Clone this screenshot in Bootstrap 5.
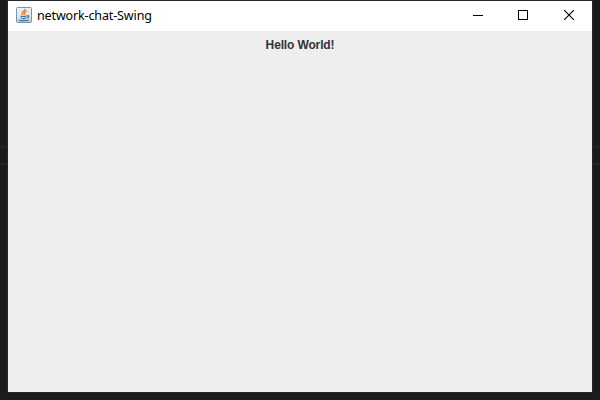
<!DOCTYPE html>
<html lang="en">
<head>
<meta charset="utf-8">
<title>network-chat-Swing</title>
<link href="https://cdn.jsdelivr.net/npm/bootstrap@5.3.0/dist/css/bootstrap.min.css" rel="stylesheet">
<style>
body{background:linear-gradient(#1b1b1b 0 146px,#252525 146px 148px,#1b1b1b 148px 163px,#252525 163px 165px,#1b1b1b 165px);padding:1px 8px 8px}
.app-window{background:#eee;outline:1px solid #272727}
.title-bar{height:30px;padding-bottom:2px;background:#fff;color:#000}
.app-icon{margin-left:8px}
.app-title{font:12.5px/18px "Noto Sans","Open Sans",sans-serif;letter-spacing:-.13px;margin-left:5px;padding-top:2px}
.win-btn{width:46px;height:28px}
.win-btn-min{width:44px}
.hello{font:bold 12px/15px "Liberation Sans",Arial,sans-serif;letter-spacing:-.14px;color:#333;padding-top:7px}
</style>
<script src="https://cdn.jsdelivr.net/npm/bootstrap@5.3.0/dist/js/bootstrap.bundle.min.js"></script>
</head>
<body class="vh-100 overflow-hidden">
<div class="app-window d-flex flex-column h-100">
  <header class="title-bar d-flex align-items-center flex-shrink-0">
    <svg class="app-icon flex-shrink-0" width="16" height="16" viewBox="0 0 16 16">
      <defs><linearGradient id="tile" x2="0" y2="1"><stop stop-color="#edf2f5"/><stop offset=".6" stop-color="#dce6ed"/><stop offset="1" stop-color="#b4c7d5"/></linearGradient></defs>
      <rect x=".5" y=".5" width="15" height="15" rx="1" fill="url(#tile)" stroke="#7895ab"/>
      <path d="M9.2 1.8C9.6 3.8 5.4 4.4 6.1 6.4c.2.6 1 .9 1.1 1.7M10.8 4C8.6 4.8 7.9 5.6 8.5 6.5c.4.6.2 1-.2 1.5" fill="none" stroke="#ef8428" stroke-width="1.4"/>
      <path d="M4.4 9c1.2.7 4.9.6 6.4 0M5.2 11c1.2.6 3.9.6 5 0M3.2 13.2c1.8.7 7.4.7 9.6-.1M11 8.8c2.6-.6 2.4 1.6 0 2.1" fill="none" stroke="#3f7193" stroke-width="1.1"/>
    </svg>
    <div class="app-title flex-grow-1 text-nowrap">network-chat-Swing</div>
    <div class="win-btn win-btn-min d-flex align-items-center justify-content-center"><svg width="10" height="10"><path d="M0 5.5h10" stroke="#000" shape-rendering="crispEdges"/></svg></div>
    <div class="win-btn d-flex align-items-center justify-content-center"><svg width="10" height="10"><path d="M.5.5h9v9h-9z" fill="none" stroke="#000" shape-rendering="crispEdges"/></svg></div>
    <div class="win-btn d-flex align-items-center justify-content-center"><svg width="10" height="10"><path d="M0 0l10 10M10 0L0 10" stroke="#000" stroke-width="1.1"/></svg></div>
  </header>
  <main class="hello text-center flex-grow-1">Hello World!</main>
</div>
</body>
</html>
